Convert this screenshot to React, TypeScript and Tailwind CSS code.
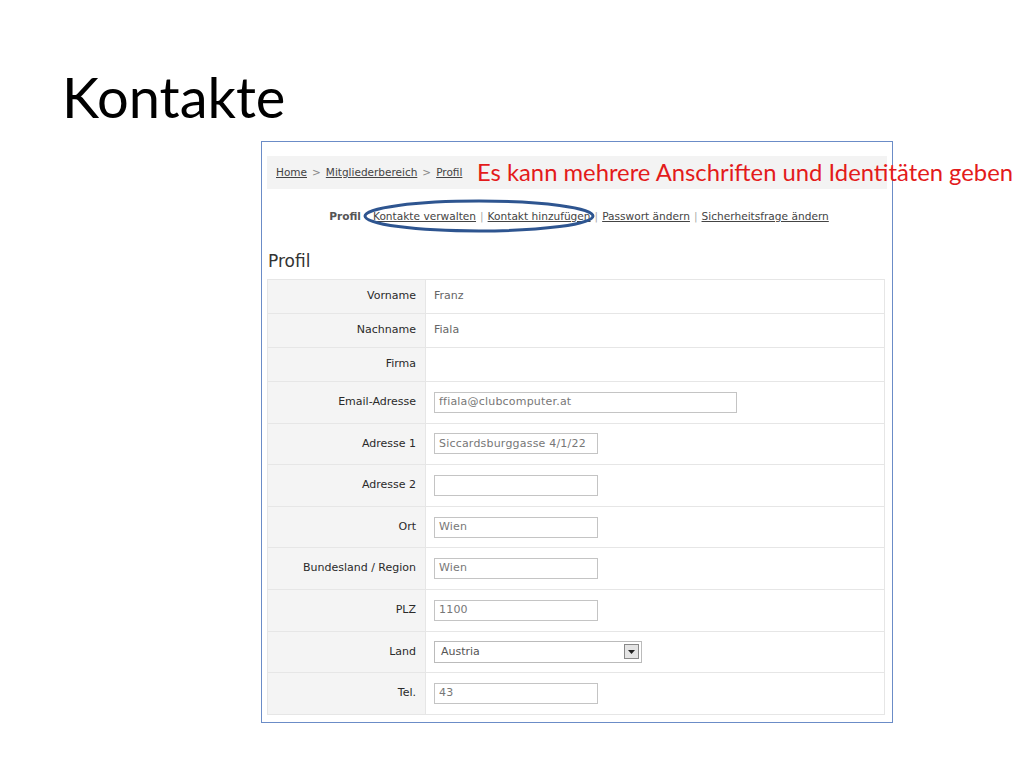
import React from 'react'

const ui = { fontFamily: '"DejaVu Sans", Verdana, sans-serif' }
const slide = { fontFamily: 'Lato, "Open Sans", sans-serif' }

type Row = { label: string; value?: string; input?: 'text' | 'wide' | 'select' }

const rows: Row[] = [
  { label: 'Vorname', value: 'Franz' },
  { label: 'Nachname', value: 'Fiala' },
  { label: 'Firma', value: '' },
  { label: 'Email-Adresse', value: 'ffiala@clubcomputer.at', input: 'wide' },
  { label: 'Adresse 1', value: 'Siccardsburggasse 4/1/22', input: 'text' },
  { label: 'Adresse 2', value: '', input: 'text' },
  { label: 'Ort', value: 'Wien', input: 'text' },
  { label: 'Bundesland / Region', value: 'Wien', input: 'text' },
  { label: 'PLZ', value: '1100', input: 'text' },
  { label: 'Land', value: 'Austria', input: 'select' },
  { label: 'Tel.', value: '43', input: 'text' },
]

function Field({ row }: { row: Row }) {
  if (!row.input) {
    return <span className="text-[11px] text-[#666]">{row.value}</span>
  }
  if (row.input === 'select') {
    return (
      <div className="w-[208px] h-[22px] border border-[#bbb] bg-white flex items-center justify-between pl-[6px] pr-[2px]">
        <span className="text-[11px] text-[#555]">{row.value}</span>
        <span className="w-[15px] h-[15px] border border-[#888] bg-[#e4e4e4] flex items-center justify-center">
          <svg width="7" height="4" viewBox="0 0 7 4"><path d="M0 0h7L3.5 4z" fill="#222" /></svg>
        </span>
      </div>
    )
  }
  return (
    <div
      className={`${row.input === 'wide' ? 'w-[303px]' : 'w-[164px]'} h-[21px] border border-[#c4c4c4] bg-white flex items-center px-[4px]`}
    >
      <span className="text-[11px] text-[#777] tracking-[0.2px]">{row.value}</span>
    </div>
  )
}

export default function App() {
  return (
    <div className="w-[1024px] h-[768px] bg-white relative overflow-hidden">
      <h1 className="pl-[62px] pt-[64px] text-[56px] leading-[66px] text-black" style={slide}>
        Kontakte
      </h1>

      <div className="ml-[261px] mt-[11px] w-[632px] h-[582px] border border-[#6b8cc7] px-[5px] pt-[14px]" style={ui}>
        {/* Brotkrumen */}
        <div className="h-[33px] bg-[#f3f3f3] flex items-center pl-[9px] text-[10.5px] text-[#444] gap-[5px]">
          <span className="underline">Home</span>
          <span className="text-[#888]">&gt;</span>
          <span className="underline">Mitgliederbereich</span>
          <span className="text-[#888]">&gt;</span>
          <span className="underline">Profil</span>
        </div>

        {/* Unternavigation */}
        <div className="h-[53px] pt-[2px] flex items-center justify-center text-[10.6px] text-[#444] gap-[4px] pl-[4px]">
          <span className="font-bold text-[#555]">Profil</span>
          <span className="underline ml-[8px]">Kontakte verwalten</span>
          <span className="text-[#aaa]">|</span>
          <span className="underline">Kontakt hinzufügen</span>
          <span className="text-[#aaa]">|</span>
          <span className="underline">Passwort ändern</span>
          <span className="text-[#aaa]">|</span>
          <span className="underline">Sicherheitsfrage ändern</span>
        </div>

        <h2 className="text-[17px] leading-[24px] text-[#333] pl-[1px] mt-[7px] mb-[6px]">Profil</h2>

        <div className="mr-[2px] border-t border-[#e6e6e6]">
          {rows.map((row) => (
            <div
              key={row.label}
              className={`flex border-b border-l border-r border-[#e6e6e6] ${row.input ? 'h-[41.6px]' : 'h-[34px]'}`}
            >
              <div className="w-[158px] shrink-0 bg-[#f4f4f4] border-r border-[#e6e6e6] flex items-center justify-end pr-[9px] text-[11px] text-[#2a2a2a]">
                {row.label}
              </div>
              <div className="flex-1 flex items-center pl-[8px]">
                <Field row={row} />
              </div>
            </div>
          ))}
        </div>
      </div>

      {/* Anmerkung */}
      <div className="absolute left-[477px] top-[156px] text-[23.8px] leading-[32px] text-[#e31b1b] whitespace-nowrap" style={slide}>
        Es kann mehrere Anschriften und Identitäten geben
      </div>
      <svg className="absolute left-[362px] top-[199px]" width="234" height="36" viewBox="0 0 234 36">
        <ellipse cx="117" cy="17" rx="114" ry="15" fill="none" stroke="#2e5590" strokeWidth="3" />
      </svg>
    </div>
  )
}
